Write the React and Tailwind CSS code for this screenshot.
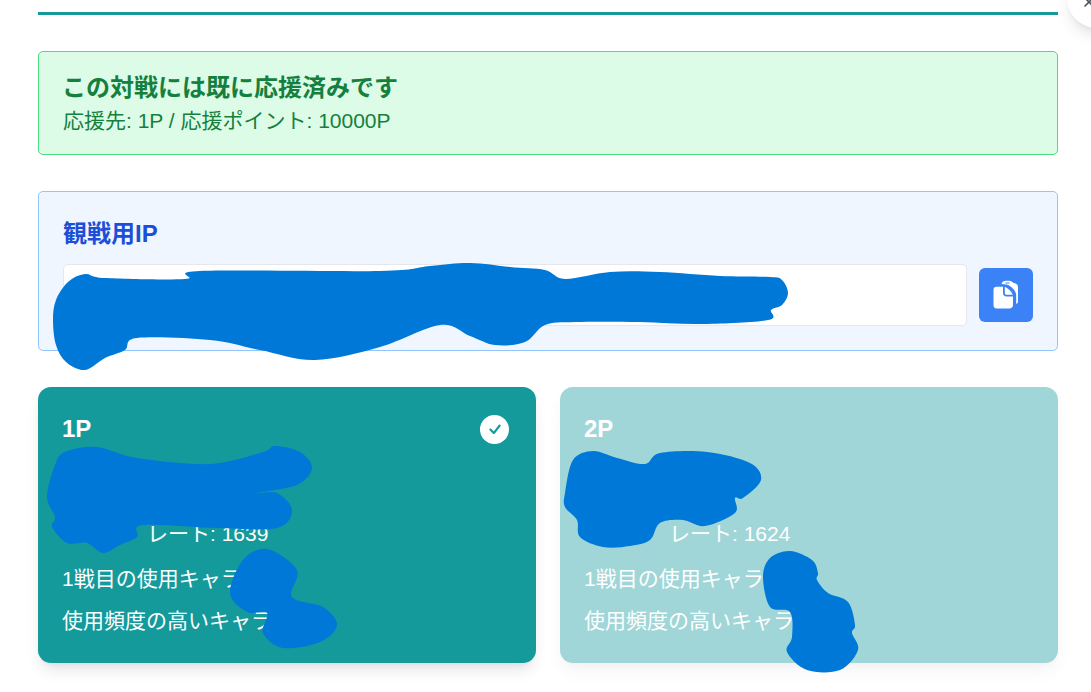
import { X } from "lucide-react";

// hand drawn cover-up blobs, points traced from the screenshot
const blobs = [
  [[56, 300], [68, 282], [85, 274], [105, 278], [185, 279], [200, 271], [380, 271], [430, 266], [470, 263], [510, 267], [545, 270], [565, 279], [610, 272], [660, 272], [720, 276], [770, 277], [782, 280], [788, 293], [782, 305], [771, 310], [768, 320], [700, 324], [640, 322], [575, 322], [545, 325], [525, 342], [495, 345], [470, 336], [440, 325], [380, 347], [315, 360], [260, 350], [210, 340], [137, 338], [125, 350], [105, 358], [85, 370], [66, 362], [56, 345], [53, 320]],
  [[55, 465], [65, 452], [97, 447], [137, 458], [210, 464], [263, 452], [275, 446], [300, 452], [312, 468], [297, 485], [257, 493], [277, 493], [292, 510], [277, 528], [217, 528], [143, 525], [137, 537], [120, 545], [103, 553], [87, 543], [67, 543], [52, 527], [55, 517], [47, 497]],
  [[230, 593], [243, 560], [267, 549], [297, 570], [292, 597], [323, 607], [337, 625], [320, 642], [283, 648], [263, 633], [267, 613], [247, 612]],
  [[565, 493], [573, 460], [593, 451], [617, 458], [645, 464], [660, 453], [707, 452], [750, 463], [761, 480], [743, 498], [735, 498], [735, 513], [705, 526], [683, 520], [660, 523], [650, 540], [630, 546], [603, 547], [580, 537], [577, 520], [565, 507]],
  [[763, 577], [770, 558], [790, 551], [812, 560], [818, 573], [817, 580], [828, 593], [848, 602], [855, 625], [852, 633], [858, 650], [840, 670], [807, 670], [787, 652], [792, 637], [790, 612], [770, 607]],
];

function smoothPath(pts) {
  const n = pts.length;
  let d = `M ${pts[0][0]} ${pts[0][1]}`;
  for (let i = 0; i < n; i++) {
    const p0 = pts[(i - 1 + n) % n], p1 = pts[i], p2 = pts[(i + 1) % n], p3 = pts[(i + 2) % n];
    d += ` C ${p1[0] + (p2[0] - p0[0]) / 6} ${p1[1] + (p2[1] - p0[1]) / 6}, ${p2[0] - (p3[0] - p1[0]) / 6} ${p2[1] - (p3[1] - p1[1]) / 6}, ${p2[0]} ${p2[1]}`;
  }
  return d + " Z";
}

function PasteIcon() {
  return (
    <svg width="26" height="30" viewBox="0 0 26 30" fill="white">
      <path fillRule="evenodd" d="M8.5 4 C9 2 11 0.8 13 0.8 L16 0.8 C18 0.8 19.5 2 20.5 3 C23 3.2 25 4.5 25 7 L25 21 C25 22.5 24.5 23.5 23.2 24 L23.2 15 C23.2 11 18 5.5 13.5 4.5 Z M12.5 2.6 L16.5 2.6 L16.5 3.6 L12.5 3.6 Z" />
      <path d="M3.5 6.8 L10 6.8 L10 13 C10 15 11.5 16.5 13.5 16.5 L20 16.5 L20 25 C20 27 18.5 28.5 16.5 28.5 L3.5 28.5 C1.5 28.5 0.5 27 0.5 25 L0.5 10 C0.5 8 1.5 6.8 3.5 6.8 Z" />
      <path d="M11.8 6.8 C15 8.2 18.5 11.5 19.8 14.8 L13.5 14.8 C12.6 14.8 11.8 14 11.8 13 Z" />
    </svg>
  );
}

function PlayerCard({ side, rate, selected }) {
  return (
    <div className={`h-[276px] rounded-[13px] bg-[#159a9c] px-[25px] pt-[25px] text-white shadow-lg ${selected ? "" : "opacity-40"}`}>
      <div className="flex h-[34px] items-center justify-between pr-[2px]">
        <span className="-ml-[1px] text-[24px] font-bold">{side}</span>
        {selected && (
          <div className="flex h-[29px] w-[29px] items-center justify-center rounded-full bg-white">
            <svg width="14" height="14" viewBox="0 0 24 24" fill="none" stroke="#159a9c" strokeWidth="3.6" strokeLinecap="round" strokeLinejoin="round">
              <path d="M4 13 L10 19 L20 6" />
            </svg>
          </div>
        )}
      </div>
      <div className="mt-[70px] pl-[84px] text-[21px] leading-[36px]">レート: {rate}</div>
      <div className="mt-[6px] -ml-[1px] text-[21px] leading-[42px]">1戦目の使用キャラ</div>
      <div className="-ml-[1px] text-[21px] leading-[42px]">使用頻度の高いキャラ</div>
    </div>
  );
}

export default function App() {
  return (
    <div className="relative h-[692px] overflow-hidden bg-white font-['Liberation_Sans','Noto_Sans_CJK_JP',sans-serif]">
      <div className="mx-[38px] mr-[33px] pt-[12px]">
        <div className="h-[3px] bg-[#159a9c]" />

        <div className="mt-[36px] h-[104px] rounded-[5px] border border-[#4ade80] bg-[#dcfce7] px-[25px] pt-[19px]">
          <h2 className="-ml-[2px] text-[24px] leading-[33px] font-bold text-[#15803d]">この対戦には既に応援済みです</h2>
          <p className="mt-[2px] -ml-[1px] text-[21px] leading-[30px] text-[#15803d]">応援先: 1P / 応援ポイント: 10000P</p>
        </div>

        <div className="mt-[36px] h-[160px] rounded-[5px] border border-[#93c5fd] bg-[#eff6ff] pl-[24px] pr-[24px] pt-[25px]">
          <h3 className="text-[24px] leading-[33px] font-bold text-[#1d4ed8]">観戦用IP</h3>
          <div className="mt-[14px] flex items-center gap-[12px]">
            <div className="h-[62px] flex-1 rounded-[5px] border border-[#e5e7eb] bg-white" />
            <button className="flex h-[54px] w-[54px] items-center justify-center rounded-[6px] bg-[#3b82f6]">
              <PasteIcon />
            </button>
          </div>
        </div>

        <div className="mt-[36px] grid grid-cols-2 gap-[24px]">
          <PlayerCard side="1P" rate="1639" selected />
          <PlayerCard side="2P" rate="1624" />
        </div>
      </div>

      <div className="absolute -top-[32px] -right-[36px] flex h-[60px] w-[60px] items-end justify-start rounded-full bg-white pb-[18px] pl-[14px] shadow-lg">
        <X size={16} strokeWidth={2.5} className="text-gray-600" />
      </div>

      <svg className="pointer-events-none absolute top-0 left-0" width="1091" height="692" viewBox="0 0 1091 692">
        {blobs.map((pts, i) => (
          <path key={i} d={smoothPath(pts)} fill="#0078d7" />
        ))}
      </svg>
    </div>
  );
}
